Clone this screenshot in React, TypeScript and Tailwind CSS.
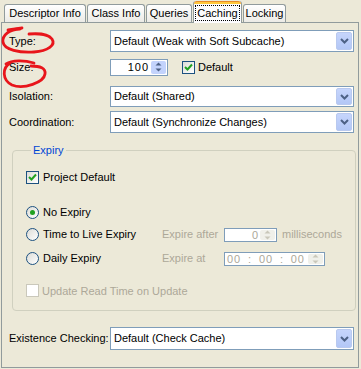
import React from 'react'

const font = { fontFamily: '"Liberation Sans", Arial, sans-serif' }

function Chevron() {
  return (
    <svg width="9" height="6" viewBox="0 0 9 6">
      <path d="M1 1 L4.5 4.5 L8 1" fill="none" stroke="#4D6185" strokeWidth="2" />
    </svg>
  )
}

function Combo({ value, width = 'w-[244px]' }: { value: string; width?: string }) {
  return (
    <div className={`${width} h-full flex items-center bg-white border border-[#7F9DB9] pl-[3px] pr-[1px]`}>
      <span className="flex-1 text-black">{value}</span>
      <div className="w-[16px] h-[calc(100%-2px)] rounded-[2px] border border-[#B9C9EF] bg-gradient-to-b from-[#C6D5FC] to-[#B3C7F6] flex items-center justify-center">
        <Chevron />
      </div>
    </div>
  )
}

function Check({ checked, disabled }: { checked?: boolean; disabled?: boolean }) {
  return (
    <div
      className={`w-[13px] h-[13px] border flex items-center justify-center ${
        disabled ? 'border-[#CAC8BB] bg-white' : 'border-[#1C5180] bg-gradient-to-br from-[#DCDCD7] to-white'
      }`}
    >
      {checked && (
        <svg width="9" height="9" viewBox="0 0 9 9">
          <path d="M1 4 L3.5 6.5 L8 1.5" fill="none" stroke="#21A121" strokeWidth="2" />
        </svg>
      )}
    </div>
  )
}

function Radio({ checked }: { checked?: boolean }) {
  return (
    <div className="w-[13px] h-[13px] rounded-full border border-[#1C5180] bg-gradient-to-br from-[#DCDCD7] to-white flex items-center justify-center">
      {checked && <div className="w-[5px] h-[5px] rounded-full bg-[#21A121]" />}
    </div>
  )
}

function SpinBtn({ disabled }: { disabled?: boolean }) {
  return (
    <div
      className={`w-[15px] h-full flex flex-col items-center justify-center gap-[2px] rounded-[2px] ${
        disabled ? 'bg-[#F0F0EA]' : 'bg-[#C3D3FC]'
      }`}
    >
      <svg width="7" height="4" viewBox="0 0 7 4">
        <path d="M0.5 3.5 L3.5 0.5 L6.5 3.5 Z" fill={disabled ? '#C9C7BA' : '#4D6185'} />
      </svg>
      <svg width="7" height="4" viewBox="0 0 7 4">
        <path d="M0.5 0.5 L3.5 3.5 L6.5 0.5 Z" fill={disabled ? '#C9C7BA' : '#4D6185'} />
      </svg>
    </div>
  )
}

function Tab({ label, width, selected }: { label: string; width: string; selected?: boolean }) {
  if (selected) {
    return (
      <div className={`${width} h-[22px] -mb-px relative z-10 bg-[#FCFCFE] border-x border-[#919B9C] rounded-t-[3px] flex flex-col`}>
        <div className="h-[3px] rounded-t-[3px] bg-[#FFC83C] border-t border-[#E68B2C]" />
        <div className="flex-1 flex items-start justify-center pt-[1px]">
          <span className="border border-dotted border-black px-[1px] leading-[14px]">{label}</span>
        </div>
      </div>
    )
  }
  return (
    <div
      className={`${width} h-[18px] border border-b-0 border-[#919B9C] rounded-t-[3px] bg-gradient-to-b from-white to-[#ECEBE6] flex items-center justify-center`}
    >
      {label}
    </div>
  )
}

export default function App() {
  return (
    <div className="relative w-[361px] h-[369px] bg-[#ECE9D8] text-[11px] text-black overflow-hidden" style={font}>
      {/* tabs */}
      <div className="h-[22px] flex items-end gap-[1px] pl-[4px]">
        <Tab label="Descriptor Info" width="w-[82px]" />
        <Tab label="Class Info" width="w-[58px]" />
        <Tab label="Queries" width="w-[46px]" />
        <Tab label="Caching" width="w-[49px]" selected />
        <Tab label="Locking" width="w-[43px]" />
      </div>

      {/* panel */}
      <div className="ml-[1px] w-[358px] h-[346px] border border-[#919B9C] pt-[7px] pl-[7px] flex flex-col">
        <div className="h-[22px] flex items-center">
          <span className="w-[101px]">Type:</span>
          <Combo value="Default (Weak with Soft Subcache)" />
        </div>

        <div className="mt-[5px] h-[20px] flex items-center">
          <span className="w-[101px]">Size:</span>
          <div className="w-[58px] h-[17px] bg-white border border-[#7F9DB9] flex items-center p-[1px]">
            <span className="flex-1 text-right pr-[2px] tracking-[1px]">100</span>
            <SpinBtn />
          </div>
          <div className="ml-[14px] flex items-center gap-[3px]">
            <Check checked />
            <span>Default</span>
          </div>
        </div>

        <div className="mt-[9px] h-[21px] flex items-center">
          <span className="w-[101px]">Isolation:</span>
          <Combo value="Default (Shared)" />
        </div>

        <div className="mt-[4px] h-[22px] flex items-center">
          <span className="w-[101px]">Coordination:</span>
          <Combo value="Default (Synchronize Changes)" />
        </div>

        {/* Expiry group */}
        <fieldset className="mt-[11px] ml-[3px] w-[342px] h-[167px] border border-[#D0D0BF] rounded-[4px] px-[13px]">
          <legend className="ml-[5px] px-[2px] text-[#0046D5] leading-[13px]">Expiry</legend>
          <div className="mt-[12px] flex items-center gap-[4px]">
            <Check checked />
            <span>Project Default</span>
          </div>

          <div className="mt-[17px] h-[20px] flex items-center gap-[4px]">
            <Radio checked />
            <span>No Expiry</span>
          </div>

          <div className="mt-[1px] h-[22px] flex items-center">
            <div className="w-[136px] flex items-center gap-[4px]">
              <Radio />
              <span>Time to Live Expiry</span>
            </div>
            <span className="w-[62px] text-[#ACA899]">Expire after</span>
            <div className="w-[53px] h-[14px] bg-white border border-[#7F9DB9] flex items-center p-[1px]">
              <span className="flex-1 text-right pr-[2px] text-[#ACA899] leading-[10px]">0</span>
              <SpinBtn disabled />
            </div>
            <span className="ml-[5px] text-[#ACA899]">milliseconds</span>
          </div>

          <div className="mt-[2px] h-[22px] flex items-center">
            <div className="w-[136px] flex items-center gap-[4px]">
              <Radio />
              <span>Daily Expiry</span>
            </div>
            <span className="w-[62px] text-[#ACA899]">Expire at</span>
            <div className="w-[101px] h-[14px] bg-white border border-[#7F9DB9] flex items-center p-[1px] text-[#ACA899]">
              <span className="flex-1 flex justify-between pl-[1px] pr-[3px] leading-[10px] tracking-[1px]">
                <span>00</span>
                <span>:</span>
                <span>00</span>
                <span>:</span>
                <span>00</span>
              </span>
              <SpinBtn disabled />
            </div>
          </div>

          <div className="mt-[13px] flex items-center gap-[3px]">
            <Check disabled />
            <span className="text-[#ACA899]">Update Read Time on Update</span>
          </div>
        </fieldset>

        <div className="mt-[16px] h-[23px] flex items-center">
          <span className="w-[101px]">Existence Checking:</span>
          <Combo value="Default (Check Cache)" />
        </div>
      </div>

      {/* hand-drawn red annotations */}
      <svg className="absolute left-0 top-0 pointer-events-none" width="361" height="369">
        <g fill="none" stroke="#E8151B" strokeWidth="2.8" strokeLinecap="round">
          <path d="M20 29 C10 29, 2 35, 3 42 C4 50, 20 53, 34 52 C48 51, 56 45, 52 39 C49 35, 40 33, 29 34" />
          <path d="M8 30 L22 28" />
          <path d="M6 64 C12 60, 24 60, 34 63 M10 63 C2 68, 2 80, 12 85 C24 90, 44 82, 45 74 C46 68, 40 66, 31 66" />
        </g>
      </svg>
    </div>
  )
}
